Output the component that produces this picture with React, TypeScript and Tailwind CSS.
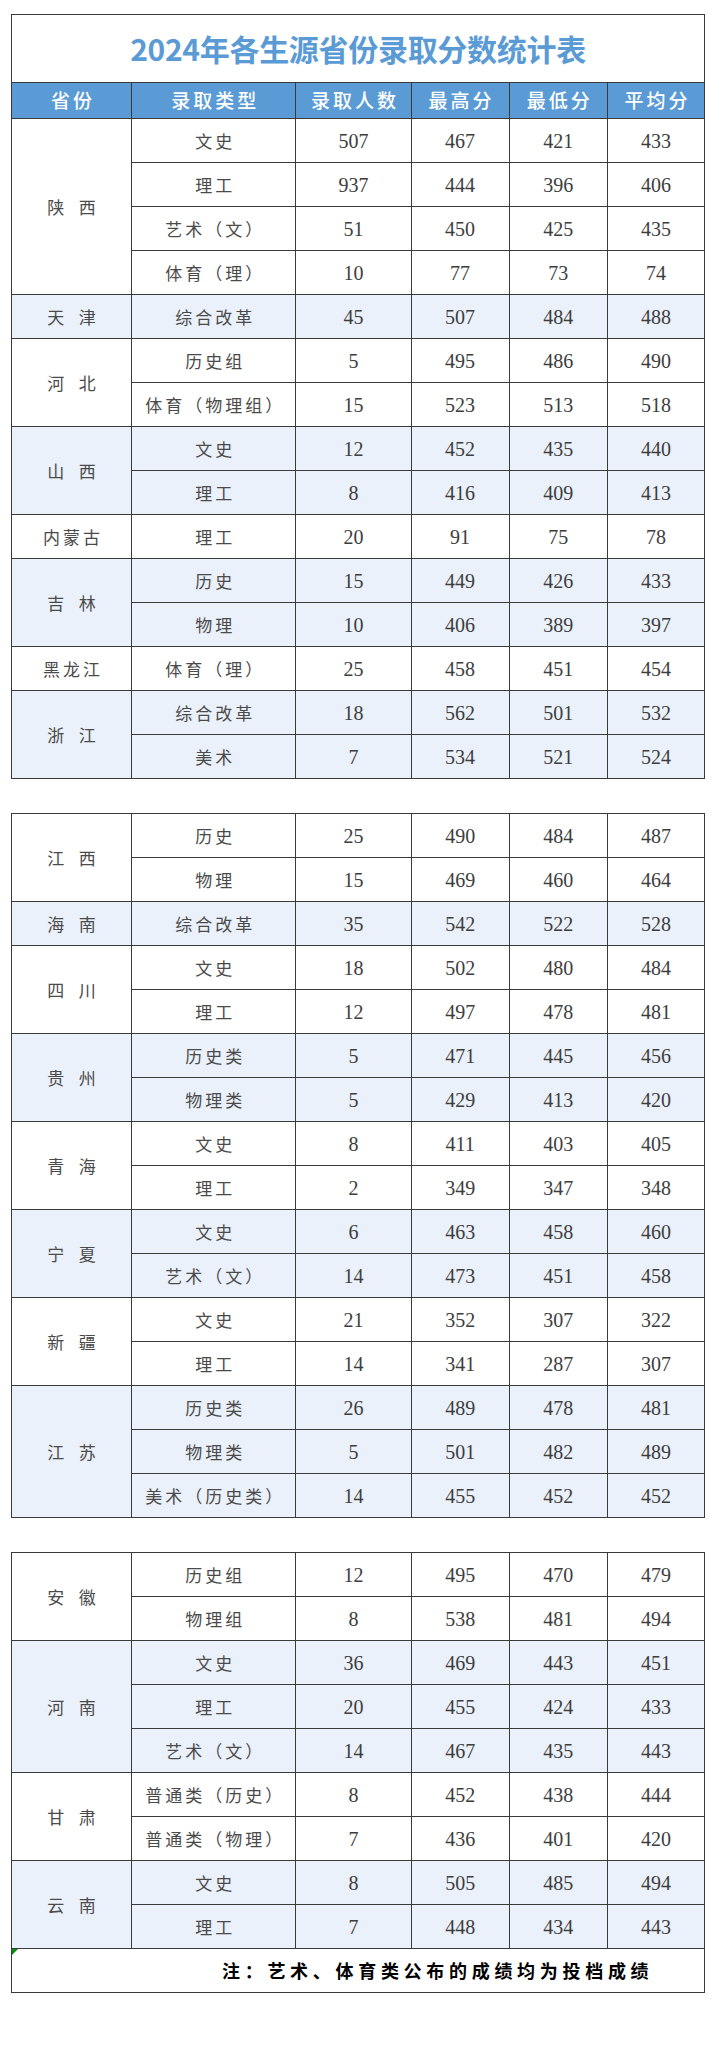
type Row = [string, number, number, number, number];
type Group = { name: string; rows: Row[] };

const sections: Group[][] = [
  [
    {
      name: "陕\u2002西",
      rows: [
        ["文史", 507, 467, 421, 433],
        ["理工", 937, 444, 396, 406],
        ["艺术（文）", 51, 450, 425, 435],
        ["体育（理）", 10, 77, 73, 74],
      ],
    },
    { name: "天\u2002津", rows: [["综合改革", 45, 507, 484, 488]] },
    {
      name: "河\u2002北",
      rows: [
        ["历史组", 5, 495, 486, 490],
        ["体育（物理组）", 15, 523, 513, 518],
      ],
    },
    {
      name: "山\u2002西",
      rows: [
        ["文史", 12, 452, 435, 440],
        ["理工", 8, 416, 409, 413],
      ],
    },
    { name: "内蒙古", rows: [["理工", 20, 91, 75, 78]] },
    {
      name: "吉\u2002林",
      rows: [
        ["历史", 15, 449, 426, 433],
        ["物理", 10, 406, 389, 397],
      ],
    },
    { name: "黑龙江", rows: [["体育（理）", 25, 458, 451, 454]] },
    {
      name: "浙\u2002江",
      rows: [
        ["综合改革", 18, 562, 501, 532],
        ["美术", 7, 534, 521, 524],
      ],
    },
  ],
  [
    {
      name: "江\u2002西",
      rows: [
        ["历史", 25, 490, 484, 487],
        ["物理", 15, 469, 460, 464],
      ],
    },
    { name: "海\u2002南", rows: [["综合改革", 35, 542, 522, 528]] },
    {
      name: "四\u2002川",
      rows: [
        ["文史", 18, 502, 480, 484],
        ["理工", 12, 497, 478, 481],
      ],
    },
    {
      name: "贵\u2002州",
      rows: [
        ["历史类", 5, 471, 445, 456],
        ["物理类", 5, 429, 413, 420],
      ],
    },
    {
      name: "青\u2002海",
      rows: [
        ["文史", 8, 411, 403, 405],
        ["理工", 2, 349, 347, 348],
      ],
    },
    {
      name: "宁\u2002夏",
      rows: [
        ["文史", 6, 463, 458, 460],
        ["艺术（文）", 14, 473, 451, 458],
      ],
    },
    {
      name: "新\u2002疆",
      rows: [
        ["文史", 21, 352, 307, 322],
        ["理工", 14, 341, 287, 307],
      ],
    },
    {
      name: "江\u2002苏",
      rows: [
        ["历史类", 26, 489, 478, 481],
        ["物理类", 5, 501, 482, 489],
        ["美术（历史类）", 14, 455, 452, 452],
      ],
    },
  ],
  [
    {
      name: "安\u2002徽",
      rows: [
        ["历史组", 12, 495, 470, 479],
        ["物理组", 8, 538, 481, 494],
      ],
    },
    {
      name: "河\u2002南",
      rows: [
        ["文史", 36, 469, 443, 451],
        ["理工", 20, 455, 424, 433],
        ["艺术（文）", 14, 467, 435, 443],
      ],
    },
    {
      name: "甘\u2002肃",
      rows: [
        ["普通类（历史）", 8, 452, 438, 444],
        ["普通类（物理）", 7, 436, 401, 420],
      ],
    },
    {
      name: "云\u2002南",
      rows: [
        ["文史", 8, 505, 485, 494],
        ["理工", 7, 448, 434, 443],
      ],
    },
  ],
];

const headers = ["省份", "录取类型", "录取人数", "最高分", "最低分", "平均分"];

const cell = "border border-[#3a3a3a] text-center align-middle p-0";
const cjk = "font-['Noto_Sans_CJK_SC',sans-serif]";
const num = "font-['Liberation_Serif','Noto_Sans_CJK_SC',serif] text-[20px] text-[#3d3d3d]";

const Cols = () => (
  <colgroup>
    <col className="w-[120px]" />
    <col className="w-[164px]" />
    <col className="w-[115px]" />
    <col className="w-[98px]" />
    <col className="w-[98px]" />
    <col className="w-[97px]" />
  </colgroup>
);

const GroupRows = ({ groups, offset }: { groups: Group[]; offset: number }) => (
  <>
    {groups.map((g, gi) =>
      g.rows.map((r, ri) => {
        const bg = (gi + offset) % 2 === 1 ? "bg-[#ebf1fa]" : "bg-white";
        return (
          <tr key={`${gi}-${ri}`} className={`h-[44px] ${bg}`}>
            {ri === 0 && (
              <td
                rowSpan={g.rows.length}
                className={`${cell} ${cjk} text-[17px] tracking-[3px] pl-[3px] text-[#4a4a4a]`}
              >
                {g.name}
              </td>
            )}
            <td className={`${cell} ${cjk} text-[17px] tracking-[3px] pl-[3px] text-[#4a4a4a]`}>{r[0]}</td>
            <td className={`${cell} ${num}`}>{r[1]}</td>
            <td className={`${cell} ${num}`}>{r[2]}</td>
            <td className={`${cell} ${num}`}>{r[3]}</td>
            <td className={`${cell} ${num}`}>{r[4]}</td>
          </tr>
        );
      })
    )}
  </>
);

export default function App() {
  return (
    <div className="min-h-[2062px] bg-white pt-[14px] pl-[11px]">
      <table className="w-[694px] table-fixed border-collapse">
        <Cols />
        <tbody>
          <tr className="h-[68px]">
            <td
              colSpan={6}
              className={`${cell} ${cjk} text-[30px] font-bold text-[#5b9bd5] tracking-[-0.3px]`}
            >
              2024年各生源省份录取分数统计表
            </td>
          </tr>
          <tr className="h-[36px] bg-[#5b9bd5]">
            {headers.map((h) => (
              <td key={h} className={`${cell} ${cjk} text-[19px] tracking-[3px] pl-[3px] text-white font-medium`}>
                {h}
              </td>
            ))}
          </tr>
          <GroupRows groups={sections[0]} offset={0} />
        </tbody>
      </table>

      <table className="mt-[34px] w-[694px] table-fixed border-collapse">
        <Cols />
        <tbody>
          <GroupRows groups={sections[1]} offset={0} />
        </tbody>
      </table>

      <table className="mt-[34px] w-[694px] table-fixed border-collapse">
        <Cols />
        <tbody>
          <GroupRows groups={sections[2]} offset={0} />
          <tr className="h-[44px] bg-white">
            <td
              colSpan={6}
              className={`${cell} relative text-left pl-[210px] ${cjk} text-[18px] font-bold tracking-[4.7px] text-black`}
            >
              <svg className="absolute left-0 top-0" width="6" height="6" viewBox="0 0 6 6">
                <polygon points="0,0 6,0 0,6" fill="#0a8a0a" />
              </svg>
              注：艺术、体育类公布的成绩均为投档成绩
            </td>
          </tr>
        </tbody>
      </table>
    </div>
  );
}
